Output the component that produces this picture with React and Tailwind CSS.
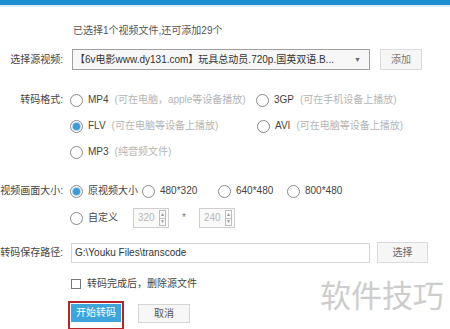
import React from "react";

const font = { fontFamily: '"Liberation Sans","Noto Sans CJK SC",sans-serif' };

function Radio({ checked }) {
  return (
    <span className="relative inline-flex h-[13px] w-[13px] shrink-0 items-center justify-center rounded-full border border-[#8a8a8a] bg-white">
      {checked && <span className="h-[7px] w-[7px] rounded-full bg-[#3d9ad6] ring-1 ring-[#a9d2ee]" />}
    </span>
  );
}

function Opt({ checked, label, hint, className = "" }) {
  return (
    <div className={"flex h-[14px] shrink-0 items-center whitespace-nowrap " + className}>
      <Radio checked={checked} />
      <span className="ml-[5px] text-[#444]">{label}</span>
      {hint && <span className="ml-[6px] text-[#b5b5b5]">{hint}</span>}
    </div>
  );
}

function Spin({ value }) {
  return (
    <div className="flex h-[20px] w-[36px] items-center border border-[#cfcfcf] bg-[#fafafa]">
      <span className="flex-1 pl-[4px] text-[#b8b8b8]">{value}</span>
      <div className="mr-[2px] flex h-[16px] w-[7px] flex-col border border-[#bdbdbd]">
        <span className="flex flex-1 items-center justify-center text-[5px] leading-none text-[#999]">▲</span>
        <span className="flex flex-1 items-center justify-center border-t border-[#bdbdbd] text-[5px] leading-none text-[#999]">▼</span>
      </div>
    </div>
  );
}

function Label({ children }) {
  return (
    <div className="flex w-[63px] shrink-0 justify-end text-[#444]">
      <span className="whitespace-nowrap">{children}</span>
    </div>
  );
}

export default function App() {
  return (
    <div className="relative h-[329px] w-[450px] overflow-hidden bg-white text-[10px] leading-none" style={font}>
      <div className="h-[5px] bg-[#1b8fd2]" />
      <div className="h-[2px] bg-[#dcecf6]" />

      <div className="mt-[17px] flex h-[14px] items-center pl-[73px] text-[#555]">已选择1个视频文件,还可添加29个</div>

      <div className="mt-[11px] flex h-[21px] items-center">
        <Label>选择源视频:</Label>
        <div className="ml-[9px] flex h-[21px] w-[298px] items-center overflow-hidden border border-[#a0a0a0] bg-[#f7f7f7] px-[2px]">
          <span className="flex-1 whitespace-nowrap text-[#333]">【6v电影www.dy131.com】玩具总动员.720p.国英双语.B...</span>
          <span className="mx-[6px] text-[7px] text-[#666]">▼</span>
        </div>
        <div className="ml-[10px] flex h-[21px] w-[42px] items-center justify-center border border-[#dadada] bg-[#f6f6f6] text-[#777]">添加</div>
      </div>

      <div className="mt-[23px] flex items-start">
        <div className="flex h-[14px] items-center">
          <Label>转码格式:</Label>
        </div>
        <div className="ml-[7px] flex flex-col gap-[12px]">
          <div className="flex items-center">
            <Opt label="MP4" hint="(可在电脑，apple等设备播放)" className="w-[186px]" />
            <Opt label="3GP" hint="(可在手机设备上播放)" />
          </div>
          <div className="flex items-center">
            <Opt checked label="FLV" hint="(可在电脑等设备上播放)" className="w-[187px]" />
            <Opt label="AVI" hint="(可在电脑等设备上播放)" />
          </div>
          <Opt label="MP3" hint="(纯音频文件)" />
        </div>
      </div>

      <div className="mt-[25px] flex h-[14px] items-center">
        <Label>视频画面大小:</Label>
        <div className="ml-[7px] flex items-center">
          <Opt checked label="原视频大小" className="w-[72px]" />
          <Opt label="480*320" className="w-[76px]" />
          <Opt label="640*480" className="w-[69px]" />
          <Opt label="800*480" />
        </div>
      </div>

      <div className="mt-[10px] flex h-[20px] items-center pl-[70px]">
        <Opt label="自定义" />
        <div className="ml-[15px]"><Spin value="320" /></div>
        <span className="ml-[13px] mr-[13px] text-[#777]">*</span>
        <Spin value="240" />
      </div>

      <div className="mt-[14px] flex h-[21px] items-center">
        <Label>转码保存路径:</Label>
        <div className="ml-[8px] flex h-[20px] w-[299px] items-center border border-[#d4d4d4] bg-white px-[3px] text-[#333]">G:\Youku Files\transcode</div>
        <div className="ml-[7px] flex h-[21px] w-[51px] items-center justify-center border border-[#dadada] bg-[#f6f6f6] text-[#666]">选择</div>
      </div>

      <div className="mt-[14px] flex h-[14px] items-center pl-[71px]">
        <span className="h-[10px] w-[10px] border border-[#777] bg-white" />
        <span className="ml-[6px] text-[#444]">转码完成后，删除源文件</span>
      </div>

      <div className="mt-[10px] flex items-start pl-[68px]">
        <div className="border-[2px] border-[#b5262b] p-[1px] pb-[6px]">
          <div className="flex h-[18px] w-[50px] items-center justify-center bg-[#3ea4dc] text-white">开始转码</div>
        </div>
        <div className="ml-[14px] mt-[3px] flex h-[19px] w-[52px] items-center justify-center border border-[#d6d6d6] bg-[#f7f7f7] text-[#555]">取消</div>
      </div>

      <div className="absolute left-[320px] top-[281px] text-[31px] leading-none text-[#cdcdcd]" style={font}>软件技巧</div>
    </div>
  );
}
